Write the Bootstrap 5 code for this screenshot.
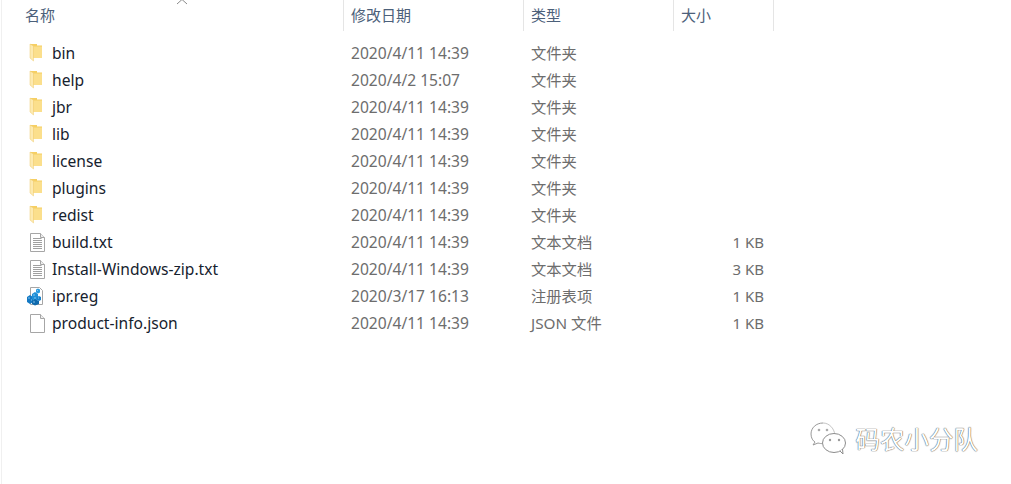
<!DOCTYPE html>
<html lang="zh-CN">
<head>
  <meta charset="UTF-8">
  <title>文件列表</title>
  <link href="https://cdn.jsdelivr.net/npm/bootstrap@5.3.2/dist/css/bootstrap.min.css" rel="stylesheet">
  <style>
    html, body { height: 100%; }
    body {
      font-family: "Noto Sans", "Noto Sans CJK SC", sans-serif;
      background: #fff;
      overflow: hidden;
    }
    .pane {
      height: 484px;
      width: 1011px;
      margin-left: 1px;
      border-left: 1px solid #f0f0f0;
      padding-bottom: 28px;
    }
    .head-row, .file-row {
      display: grid;
      grid-template-columns: 342px 180px 150px 100px;
    }
    .head-row { height: 31px; margin-bottom: 9px; }
    .head-cell {
      position: relative;
      border-right: 1px solid #e5e5e5;
      padding: 3px 0 0 7px;
      font-size: 15px;
      line-height: 24px;
      color: #4c607a;
    }
    .head-cell:first-child { padding-left: 23px; }
    .sort-mark {
      position: absolute;
      left: 174px;
      top: -2px;
    }
    .file-row { height: 27px; line-height: 27px; font-size: 15.3px; color: #6d6d6d; }
    .name-cell { display: flex; align-items: center; color: #16222e; padding-left: 27px; font-size: 15.6px; }
    .name-cell svg { width: 16px; height: 20px; margin-right: 7px; flex: none; margin-top: -2px; overflow: visible; }
    .date-cell { padding-left: 7px; font-size: 15.6px; }
    .type-cell { padding-left: 7px; line-height: 26px; }
    .size-cell { text-align: right; padding-right: 10px; font-size: 15px; }
    .mark-text {
      font-family: "Noto Sans CJK SC", sans-serif;
      font-size: 24.5px;
      line-height: 30px;
      color: #fff;
      text-shadow: 0 0 1px #444, 0 0 1px #666;
    }
    .mark-box { padding-right: 34px; gap: 9px; }
  </style>
</head>
<body>
  <svg width="0" height="0" class="d-block">
    <defs>
      <symbol id="ico-folder" viewBox="0 0 16 20" overflow="visible">
        <path d="M1 1h7v1.500h5V15H1z" fill="#f6cf63"/>
        <path d="M4.500 3.500H13V15H4.500z" fill="#fbdf8c"/>
        <path d="M1 1l3.500 2v15l-3.500-3z" fill="#fdeab0" stroke="#efcb6e" stroke-width=".5"/>
      </symbol>
      <symbol id="ico-text" viewBox="0 0 16 20" overflow="visible">
        <path d="M1.500 1.500h10l4 4v14h-14z" fill="#fff" stroke="#a6a6a6"/>
        <path d="M11.500 1.500v4h4" fill="#eee" stroke="#a6a6a6"/>
        <path d="M4 6.500h8.500M4 8.500h9M4 10.500h9M4 12.500h9M4 14.500h9M4 16.500h9" stroke="#a0a0a0"/>
      </symbol>
      <symbol id="ico-blank" viewBox="0 0 16 20" overflow="visible">
        <path d="M1.500 1.500h10l4 4v14h-14z" fill="#fff" stroke="#a6a6a6"/>
        <path d="M11.500 1.500v4h4" fill="#eee" stroke="#a6a6a6"/>
      </symbol>
      <symbol id="ico-reg" viewBox="0 0 16 20" overflow="visible">
        <path d="M1.500 1.500h9l3 3v14h-12z" fill="#fff" stroke="#a6a6a6"/>
        <path d="M-2 11l3-2 3 2v5l-3 2-3-2z" fill="#1479c4"/>
        <path d="M3 8l3-2 3 2v5l-3 2-3-2z" fill="#1f8fd8"/>
        <path d="M3 15l3-2 4 2v3l-4 1.500-3-1.500z" fill="#0f6aad"/>
        <path d="M8 11l2-1 2 1v3l-2 1-2-1z" fill="#1a82cc"/>
        <path d="M7 3.500l2-1 2 1v3l-2 1-2-1z" fill="#2a9be0"/>
        <path d="M-1 12h2M2 14h1M4 9h2M5 12h2M4 16h2M8 4.500h1M9 12h1" stroke="#9fd6f5" stroke-width=".8"/>
      </symbol>
    </defs>
  </svg>

  <div class="pane d-flex flex-column">
    <div class="head-row">
      <div class="head-cell">名称
        <svg class="sort-mark" width="12" height="7" viewBox="0 0 12 7"><path d="M1 6l5-4.500L11 6" fill="none" stroke="#8a8a8a"/></svg>
      </div>
      <div class="head-cell">修改日期</div>
      <div class="head-cell">类型</div>
      <div class="head-cell">大小</div>
    </div>

    <div id="rows"></div>

    <div class="mt-auto d-flex justify-content-end align-items-center mark-box">
      <svg width="40" height="34" viewBox="0 0 40 34">
        <path d="M16 1C9 1 4 6 4 12c0 4 2 7 4 8l-2 3 5-2c2 .5 3 .6 4 .6" fill="#fff" stroke="#999"/>
        <path d="M28 13C27 6 22 1 16 1" fill="none" stroke="#c4c4c4"/>
        <ellipse cx="27" cy="21" rx="11.500" ry="9.500" fill="#fff" stroke="#8c8c8c"/>
        <path d="M33 29l3 3-.5-5" fill="#fff" stroke="#8c8c8c"/>
        <circle cx="12" cy="8" r="1.300" fill="#aaa"/>
        <circle cx="20" cy="8" r="1.300" fill="#aaa"/>
        <circle cx="23" cy="18" r="1.200" fill="#999"/>
        <circle cx="32" cy="18" r="1.200" fill="#999"/>
      </svg>
      <span class="mark-text">码农小分队</span>
    </div>
  </div>

  <script>
    var files = [
      ['bin', '2020/4/11 14:39', '文件夹', '', 'folder'],
      ['help', '2020/4/2 15:07', '文件夹', '', 'folder'],
      ['jbr', '2020/4/11 14:39', '文件夹', '', 'folder'],
      ['lib', '2020/4/11 14:39', '文件夹', '', 'folder'],
      ['license', '2020/4/11 14:39', '文件夹', '', 'folder'],
      ['plugins', '2020/4/11 14:39', '文件夹', '', 'folder'],
      ['redist', '2020/4/11 14:39', '文件夹', '', 'folder'],
      ['build.txt', '2020/4/11 14:39', '文本文档', '1 KB', 'text'],
      ['Install-Windows-zip.txt', '2020/4/11 14:39', '文本文档', '3 KB', 'text'],
      ['ipr.reg', '2020/3/17 16:13', '注册表项', '1 KB', 'reg'],
      ['product-info.json', '2020/4/11 14:39', 'JSON 文件', '1 KB', 'blank']
    ];
    document.getElementById('rows').innerHTML = files.map(function (f) {
      return '<div class="file-row">' +
        '<div class="name-cell"><svg><use href="#ico-' + f[4] + '"/></svg>' + f[0] + '</div>' +
        '<div class="date-cell">' + f[1] + '</div>' +
        '<div class="type-cell">' + f[2] + '</div>' +
        '<div class="size-cell">' + f[3] + '</div>' +
        '</div>';
    }).join('');
  </script>
  <script src="https://cdn.jsdelivr.net/npm/bootstrap@5.3.2/dist/js/bootstrap.bundle.min.js"></script>
</body>
</html>
